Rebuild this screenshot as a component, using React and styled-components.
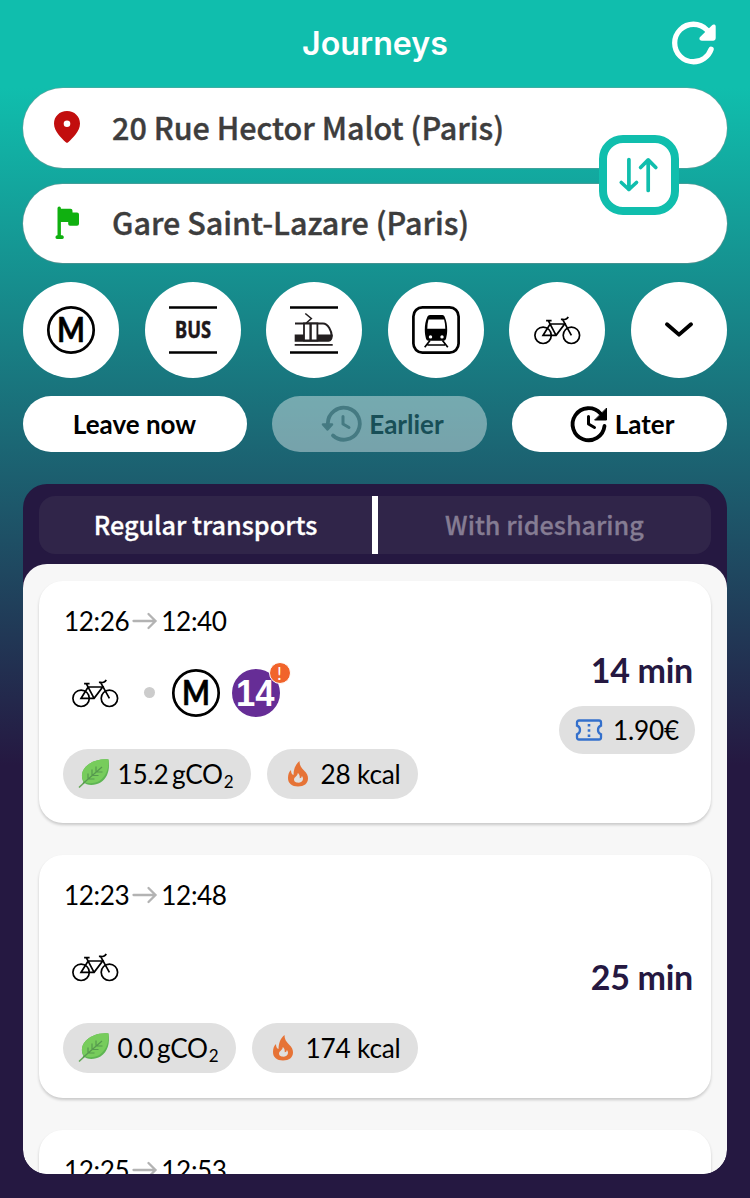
import React from 'react';
import styled, { createGlobalStyle } from 'styled-components';

const lato = `Lato, "Liberation Sans", sans-serif`;
const source = `"Noto Sans CJK SC", "Open Sans", sans-serif`;

const Global = createGlobalStyle`
  * { box-sizing: border-box; }
  body { margin: 0; background: #251841; font-family: ${lato}; color: #000; }
  button { border: 0; padding: 0; margin: 0; font: inherit; color: inherit; background: none; }
  svg { display: block; flex: none; overflow: visible; }
`;

const Screen = styled.div`
  height: 1198px;
  overflow: hidden;
  display: flex;
  flex-direction: column;
  padding: 0 23px 24px;
  background: linear-gradient(#10bead 0, #10bead 88px, #251841 765px);
`;

const Header = styled.header`
  height: 88px;
  flex: none;
  display: grid;
  grid-template-columns: 60px 1fr 60px;
  align-items: center;
  padding-bottom: 3px;
`;

const Title = styled.h1`
  grid-column: 2;
  margin: 2px 0 0;
  text-align: center;
  font: 600 32.2px/40px Inter, sans-serif;
  color: #fff;
`;

const Refresh = styled.button`
  justify-self: end;
  margin-right: 7px;
`;

const Search = styled.section`
  position: relative;
  display: grid;
  gap: 16px;
`;

const Field = styled.div`
  height: 79.5px;
  border-radius: 40px;
  background: #fff;
  box-shadow: 0 0 1px 0.5px rgba(150, 150, 150, 0.7);
  display: flex;
  align-items: center;
  padding-left: 28px;
  gap: 29px;
  font: 500 30.5px/40px ${source};
  color: #3d3d3d;
  -webkit-text-stroke: 0.4px currentColor;
`;

const Address = styled.span`
  padding-bottom: 2px;
`;

const Swap = styled.button`
  position: absolute;
  right: 48px;
  top: 47px;
  width: 80px;
  height: 80px;
  border: 8px solid #10bead;
  border-radius: 24px;
  background: #fff;
  display: grid;
  place-items: center;
`;

const Modes = styled.nav`
  display: flex;
  justify-content: space-between;
  margin-top: 19px;
`;

const Mode = styled.button`
  width: 96px;
  height: 96px;
  border-radius: 50%;
  background: #fff;
  display: grid;
  place-items: center;
`;

const Times = styled.div`
  display: grid;
  grid-template-columns: 224px 215px 215px;
  justify-content: space-between;
  margin-top: 18px;
`;

const TimeButton = styled.button`
  height: 56px;
  border-radius: 28px;
  background: ${(p) => (p.$muted ? 'rgba(255,255,255,0.4)' : '#fff')};
  color: ${(p) => (p.$muted ? '#184f57' : '#000')};
  display: flex;
  align-items: center;
  justify-content: center;
  gap: 7px;
  padding-left: ${(p) => (p.$icon ? 5 : 0)}px;
  padding-right: ${(p) => (p.$icon ? 0 : 1)}px;
  font: 700 26px/32px ${lato};
`;

const Panel = styled.main`
  margin-top: 32px;
  flex: 1;
  min-height: 0;
  border-radius: 24px;
  overflow: hidden;
  background: #251841;
  display: flex;
  flex-direction: column;
`;

const Tabs = styled.div`
  flex: none;
  height: 58px;
  margin: 12px 16px 10px;
  border-radius: 16px;
  background: #302549;
  display: grid;
  grid-template-columns: 333px 6px 1fr;
`;

const Tab = styled.button`
  font: 500 25.2px/56px ${source};
  height: 56px;
  color: ${(p) => (p.$active ? '#fff' : '#857c93')};
  -webkit-text-stroke: 0.3px currentColor;
`;

const Divider = styled.i`
  background: #fff;
`;

const List = styled.div`
  flex: 1;
  min-height: 0;
  overflow: hidden;
  border-radius: 24px;
  background: #f7f7f7;
  padding: 16.5px 16px 0;
  display: flex;
  flex-direction: column;
  gap: 32px;
`;

const Card = styled.article`
  flex: none;
  height: 242.8px;
  border-radius: 24px;
  background: #fff;
  box-shadow: 0 2px 3px rgba(0, 0, 0, 0.19);
  display: flex;
  justify-content: space-between;
  padding: 24px 16px 24px 24px;
`;

const Details = styled.div`
  display: flex;
  flex-direction: column;
`;

const Schedule = styled.div`
  display: flex;
  align-items: center;
  gap: 3px;
  height: 32px;
  padding-left: 1px;
  font: 400 26.2px/32px ${lato};
  letter-spacing: -0.4px;
`;

const Route = styled.div`
  height: 48px;
  margin-top: 32px;
  display: flex;
  align-items: center;
  padding-left: 8px;
`;

const Dot = styled.i`
  width: 11px;
  height: 11px;
  margin: 0 16.500px 0 25px;
  border-radius: 50%;
  background: #ccc;
`;

const Line = styled.div`
  position: relative;
  margin-left: 12px;
`;

const Alert = styled.span`
  position: absolute;
  top: -7px;
  right: -11px;
  width: 22px;
  height: 22px;
  border: 1px solid #fff;
  border-radius: 50%;
  background: #f1642b;
  color: #fff;
  text-align: center;
  font: 400 18px/20px ${lato};
`;

const Chips = styled.div`
  display: flex;
  gap: 16px;
  margin-top: 32px;
`;

const Chip = styled.div`
  height: ${(p) => (p.$small ? 48 : 50)}px;
  width: ${(p) => p.$w}px;
  border-radius: 25px;
  background: #e0e0e0;
  display: flex;
  align-items: center;
  justify-content: space-between;
  padding: 0 ${(p) => (p.$small ? 16 : 17.5)}px 0 ${(p) => p.$left}px;
  font: 400 26.2px/32px ${lato};
  letter-spacing: -0.2px;
  word-spacing: ${(p) => p.$tight ? -3 : 0}px;
  white-space: nowrap;
  sub { font-size: 17px; line-height: 0; vertical-align: -4px; margin-left: 1px; }
`;

const Summary = styled.div`
  display: flex;
  flex-direction: column;
  justify-content: center;
  align-items: flex-end;
  gap: 16px;
  padding-top: 1px;
  font: 700 34px/40px ${lato};
  color: #251841;
`;

const Duration = styled.div`
  padding-right: 2px;
  letter-spacing: -0.3px;
`;

const Fare = styled.div`
  color: #000;
`;

const RefreshIcon = () => (
  <svg width="50" height="50" viewBox="0 0 512 512" fill="none">
    <path d="M400 148l-21.1-24.6A191.4 191.4 0 0 0 240 64C134 64 48 150 48 256s86 192 192 192a192.1 192.1 0 0 0 181-128" stroke="#fff" strokeWidth="54" strokeLinecap="round" />
    <path d="M468 86v122a24 24 0 0 1-24 24H326c-24 0-32-24-18-38L428 76c15-15 40-10 40 10z" fill="#fff" />
  </svg>
);

const PinIcon = () => (
  <svg width="32" height="34" viewBox="0 0 32 34">
    <path fillRule="evenodd" fill="#c20e0e" d="M16 0C8.500 0 3 5.500 3 12.500c0 8 7.500 14.500 11.500 18.600q1.500 1.600 3 0C21.500 27 29 20.500 29 12.500 29 5.500 23.500 0 16 0zm0 9.500a3.300 3.300 0 1 1 0 6.600 3.300 3.300 0 0 1 0-6.600z" />
  </svg>
);

const FlagIcon = () => (
  <svg width="32" height="34" viewBox="0 0 32 34" fill="#10b010">
    <path d="M6.500 2.200a1.700 1.700 0 0 1 3.400 0v.6H19.500q2 0 2 2V6.500H26q2 0 2 2v9.200q0 2-2 2h-7q-1.800 0-1.800-1.800v-2H9.900v13.300h1.400a2 2 0 0 1 0 3.900H6a2 2 0 0 1 0-3.900h.5z" />
  </svg>
);

const SwapIcon = () => (
  <svg width="42" height="38" viewBox="0 0 42 38" fill="none" stroke="#10bead" strokeWidth="3.700" strokeLinecap="round" strokeLinejoin="round">
    <path d="M10.900 3.500v30M3.300 26.500l7.600 7 7.600-7M30.200 34.500v-30M22.600 11.500l7.600-7.600 7.600 7.600" />
  </svg>
);

const MetroIcon = () => (
  <svg width="48" height="48" viewBox="0 0 48 48">
    <circle cx="24" cy="24" r="22.700" fill="#fff" stroke="#000" strokeWidth="2.700" />
    <text x="10" y="36" fontFamily="Lato" fontWeight="700" fontSize="33.500" textLength="28" lengthAdjust="spacingAndGlyphs" stroke="#000" strokeWidth="0.500">M</text>
  </svg>
);

const BusIcon = () => (
  <svg width="48" height="48" viewBox="0 0 48 48">
    <path d="M0 1.500h48M0 46.500h48" stroke="#000" strokeWidth="2.700" />
    <text x="6" y="32" fontFamily="Noto Sans" fontWeight="700" fontSize="23" textLength="36" lengthAdjust="spacingAndGlyphs" fill="#1d171a" stroke="#1d171a" strokeWidth="0.500">BUS</text>
  </svg>
);

const TramIcon = () => (
  <svg width="48" height="48" viewBox="0 0 48 48">
    <path d="M0 1.500h48M0 46.500h48" stroke="#000" strokeWidth="2.700" />
    <g fill="none" stroke="#231f20">
      <path d="M15.300 7.500l6 5-5 4.500" strokeWidth="1.600" />
      <path d="M5 17.500h28c5 0 8.800 7.500 8.800 13" strokeWidth="2" />
      <path d="M4.700 38.900h38" strokeWidth="1.800" />
    </g>
    <path d="M4.700 28.500h37.800c.8 4.500-1.500 7.200-4 7.200H4.700z" fill="#231f20" />
    <path d="M14 17.500h6.300v17H14zM20.900 17.500h6.500v17h-6.500z" fill="#fff" stroke="#231f20" strokeWidth="1.800" />
  </svg>
);

const TrainIcon = () => (
  <svg width="48" height="48" viewBox="0 0 48 48">
    <rect x="1.400" y="1.400" width="45.200" height="45.200" rx="9" fill="none" stroke="#000" strokeWidth="2.700" />
    <path fillRule="evenodd" d="M18 9h12.500q1.500 0 2 1.500C34.500 15 35.200 19 35.200 24c0 3-.5 6-1.200 8.700q-.5 2-2.500 2h-15q-2 0-2.500-2c-.7-2.700-1.200-5.700-1.200-8.700 0-5 .7-9 2.700-13.500q.5-1.500 2.500-1.500zM16.500 13.400c-.8 3-1.200 6-1.200 9.300h18c0-3.300-.4-6.300-1.200-9.300zM18.500 29.200a1.700 1.700 0 1 0 .01 3.400 1.700 1.700 0 0 0-.01-3.400zm11.500 0a1.700 1.700 0 1 0 .01 3.400 1.700 1.700 0 0 0-.01-3.400z" />
    <path d="M18 34.500l-5.300 6.800M30.500 34.500l5.300 6.800M15.500 39h17.500" fill="none" stroke="#000" strokeWidth="1.700" />
  </svg>
);

const BikeIcon = () => (
  <svg width="48" height="48" viewBox="0 0 48 48" fill="none" stroke="#000" strokeWidth="1.700">
    <g transform="translate(0.400 0.800)">
      <circle cx="9.700" cy="28.500" r="8.200" />
      <circle cx="38" cy="28.500" r="8.200" />
      <path d="M9.700 28.500l7-11.300h14.500l-8.500 11.300zM15 14l7.700 14.500M12.700 13.800h5.500" />
      <path d="M38 28.500L29.300 12.800c2.500 0 4.500-.6 5.500-2.800M27.500 12.600h2.500" />
    </g>
  </svg>
);

const ChevronIcon = () => (
  <svg width="48" height="48" viewBox="0 0 48 48" fill="none" stroke="#000" strokeWidth="3.900" strokeLinecap="round" strokeLinejoin="round">
    <path d="M12 18.200l12 10.400 12-10.400" />
  </svg>
);

const EarlierIcon = () => (
  <svg width="42" height="38" viewBox="0 0 42 38" fill="none" stroke="#457a82" strokeWidth="3.800" strokeLinecap="round" strokeLinejoin="round">
    <path d="M7.800 18.500A16 16 0 1 1 13 30.500" />
    <path d="M3 19.500h9l-4.500 5z" fill="#457a82" strokeWidth="2.500" />
    <path d="M23 11.500V19l6 3.500" strokeWidth="3" />
  </svg>
);

const LaterIcon = () => (
  <svg width="38" height="38" viewBox="0 0 38 38" fill="none" stroke="#000" strokeWidth="3.800" strokeLinecap="round" strokeLinejoin="round">
    <path d="M30.500 8.500A16 16 0 1 0 34.500 21" />
    <path d="M36.500 3.500v11.500H25z" fill="#000" strokeWidth="1" />
    <path d="M18.500 11.500V19l6 3.500" strokeWidth="3" />
  </svg>
);

const ArrowIcon = () => (
  <svg width="26" height="20" viewBox="0 0 26 20" fill="none" stroke="#b3b3b3" strokeWidth="2.300" strokeLinecap="round">
    <path d="M1.500 10h22M16.500 3l7 7-7 7" />
  </svg>
);

const LineIcon = () => (
  <svg width="48" height="48" viewBox="0 0 48 48">
    <circle cx="24" cy="24" r="24" fill="#662d96" />
    <text x="4" y="37" fontFamily="Liberation Sans" fontWeight="700" fontSize="36" textLength="38.500" lengthAdjust="spacingAndGlyphs" fill="#fff">14</text>
  </svg>
);

const LeafIcon = () => (
  <svg width="32" height="32" viewBox="0 0 32 32">
    <path d="M1.500 29L8 23" stroke="#66a85a" strokeWidth="1.700" strokeLinecap="round" />
    <path d="M30.500 1.500C22 .5 11 3.500 6 11c-2.800 4-2.500 10-.5 13 3 4 12 3.500 17 .5C30 19.500 32 11 30.500 1.500z" fill="#5eb553" />
    <path d="M30.500 1.500C22 .5 11 3.500 6 11c-2.800 4-2.500 9-.5 12 3.500 3.500 12 2.500 16.500-.5C28.500 17.500 31 10 30.500 1.500z" fill="#77cc5c" />
    <path d="M5 25.500L24 9M18 14V8.500M18.500 14h6M14 17.500v-6M14.500 17.500h6M10 21v-5.500M10.500 21h6" fill="none" stroke="#56994e" strokeWidth="1.200" />
  </svg>
);

const FlameIcon = () => (
  <svg width="22" height="28" viewBox="0 0 22 28">
    <path fillRule="evenodd" fill="#e67336" d="M12.500 1c0 4 1.500 6.500 4.500 9.500 3 3 4 5 4 8 0 5-4 8-10 8S1 23.500 1 18c0-3.500 1-6.500 3-8 0 3 1 4.500 2.500 5C6.500 9.500 8.500 4 12.500 1zM10.800 13c0 3-3.800 4-3.800 6.500 0 1.500 1 2.700 2.500 3 3 .6 6.500-.5 6.500-3.500 0-1.500-.5-2.500-1.200-3 0 1.500-1 2.200-2.100 2.200.3-2-.3-4-1.900-5.200z" />
  </svg>
);

const TicketIcon = () => (
  <svg width="28" height="22" viewBox="0 0 28 22" fill="none" stroke="#3470cc" strokeWidth="2.300">
    <path d="M4 1.500h20q2 0 2 2v3.200c-4 1.500-4 7 0 8.600v3.200q0 2-2 2H4q-2 0-2-2v-3.200c4-1.600 4-7.100 0-8.600V3.500q0-2 2-2z" />
    <path d="M14 5v13" strokeDasharray="2.600 2.600" strokeWidth="2.600" />
  </svg>
);

const modes = [MetroIcon, BusIcon, TramIcon, TrainIcon, BikeIcon, ChevronIcon];

const journeys = [
  { from: '12:26', to: '12:40', duration: '14 min', fare: '1.90€', line: true, co2: '15.2', co2Width: 188, kcal: '28', kcalWidth: 151 },
  { from: '12:23', to: '12:48', duration: '25 min', co2: '0.0', co2Width: 173, kcal: '174', kcalWidth: 166 },
  { from: '12:25', to: '12:53' },
];

const Journey = ({ j }) => (
  <Card>
    <Details>
      <Schedule>
        {j.from}
        <ArrowIcon />
        {j.to}
      </Schedule>
      {j.duration && (
        <>
          <Route>
            <BikeIcon />
            {j.line && (
              <>
                <Dot />
                <MetroIcon />
                <Line>
                  <LineIcon />
                  <Alert>!</Alert>
                </Line>
              </>
            )}
          </Route>
          <Chips>
            <Chip $w={j.co2Width} $left={15} $tight>
              <LeafIcon />
              <span>{j.co2} gCO<sub>2</sub></span>
            </Chip>
            <Chip $w={j.kcalWidth} $left={20}>
              <FlameIcon />
              <span>{j.kcal} kcal</span>
            </Chip>
          </Chips>
        </>
      )}
    </Details>
    {j.duration && (
      <Summary>
        <Duration>{j.duration}</Duration>
        {j.fare && (
          <Fare>
            <Chip $small $w={136} $left={16}>
              <TicketIcon />
              <span>{j.fare}</span>
            </Chip>
          </Fare>
        )}
      </Summary>
    )}
  </Card>
);

export default function App() {
  return (
    <Screen>
      <Global />
      <Header>
        <Title>Journeys</Title>
        <Refresh aria-label="Refresh"><RefreshIcon /></Refresh>
      </Header>
      <Search>
        <Field><PinIcon /><Address>20 Rue Hector Malot (Paris)</Address></Field>
        <Field><FlagIcon /><Address>Gare Saint-Lazare (Paris)</Address></Field>
        <Swap aria-label="Swap"><SwapIcon /></Swap>
      </Search>
      <Modes>
        {modes.map((Icon, i) => <Mode key={i}><Icon /></Mode>)}
      </Modes>
      <Times>
        <TimeButton>Leave now</TimeButton>
        <TimeButton $muted $icon><EarlierIcon />Earlier</TimeButton>
        <TimeButton $icon><LaterIcon />Later</TimeButton>
      </Times>
      <Panel>
        <Tabs>
          <Tab $active>Regular transports</Tab>
          <Divider />
          <Tab>With ridesharing</Tab>
        </Tabs>
        <List>
          {journeys.map((j) => <Journey key={j.from} j={j} />)}
        </List>
      </Panel>
    </Screen>
  );
}
